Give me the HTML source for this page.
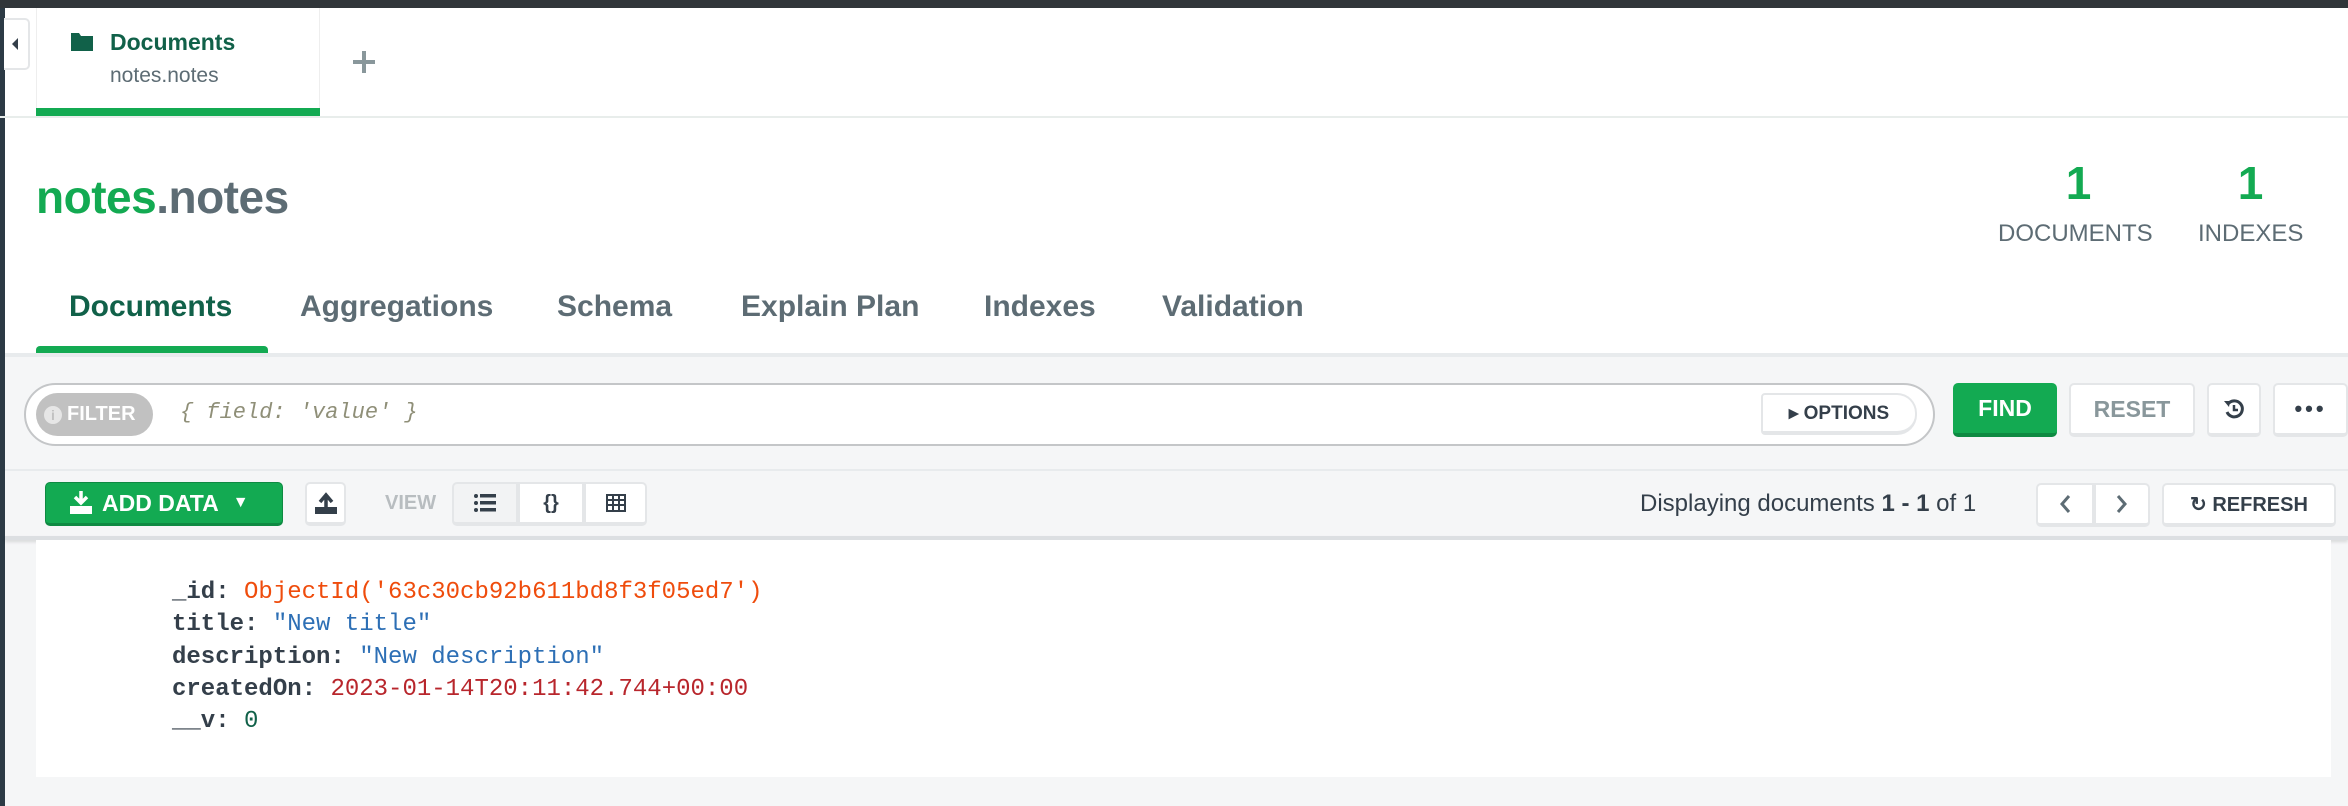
<!DOCTYPE html>
<html><head><meta charset="utf-8"><style>
*{margin:0;padding:0;box-sizing:border-box}
body{width:2348px;height:806px;overflow:hidden;background:#f5f6f7;font-family:"Liberation Sans",sans-serif;position:relative}
.a{position:absolute}
.btn{position:absolute;background:#fff;border:2px solid #e4e6e8;border-bottom-width:4px;border-radius:5px;display:flex;align-items:center;justify-content:center;color:#5d6c74;font-weight:bold}
.mono{font-family:"Liberation Mono",monospace}
.k{font-weight:bold;color:#343f4a}
.t{position:absolute;top:290px;font-size:30px;font-weight:bold;color:#5d6c74}
</style></head><body>
<div class="a" style="left:0;top:0;width:2348px;height:8px;background:#31363a"></div>
<div class="a" style="left:0;top:8px;width:2348px;height:110px;background:#fff"></div>
<div class="a" style="left:0;top:8px;width:5px;height:798px;background:#2c3a45"></div>
<div class="a" style="left:4px;top:18px;width:26px;height:52px;background:#fff;border:2px solid #e4e6e8;border-left:none;border-radius:0 5px 5px 0"></div>
<svg class="a" style="left:10px;top:38px" width="10" height="12"><path d="M8 0V12L2 6Z" fill="#343f4a"/></svg>
<div class="a" style="left:36px;top:8px;width:284px;height:108px;border-left:1px solid #eee;border-right:1px solid #eee"></div>
<svg class="a" style="left:71px;top:33px" width="22" height="18"><path d="M0 0H8L10 3H22V18H0Z" fill="#116149"/></svg>
<div class="a" style="left:110px;top:29px;font-size:23px;font-weight:bold;color:#116149">Documents</div>
<div class="a" style="left:110px;top:64px;font-size:21px;color:#5d6c74">notes.notes</div>
<div class="a" style="left:36px;top:108px;width:284px;height:8px;background:#13aa52"></div>
<svg class="a" style="left:352px;top:50px" width="24" height="24"><path d="M12 1V23M1 12H23" stroke="#89979b" stroke-width="4"/></svg>
<div class="a" style="left:0;top:116px;width:2348px;height:2px;background:#e8edeb"></div>
<div class="a" style="left:5px;top:118px;width:2343px;height:235px;background:#fff"></div>
<div class="a" style="left:36px;top:170px;font-size:46px;font-weight:bold;color:#5d6c74;letter-spacing:-0.5px"><span style="color:#13aa52">notes</span>.notes</div>
<div class="a" style="left:2000px;top:156px;width:157px;text-align:center;font-size:46px;font-weight:bold;color:#13aa52">1</div>
<div class="a" style="left:2198px;top:156px;width:105px;text-align:center;font-size:46px;font-weight:bold;color:#13aa52">1</div>
<div class="a" style="left:1998px;top:220px;font-size:24px;color:#5d6c74">DOCUMENTS</div>
<div class="a" style="left:2198px;top:220px;font-size:24px;color:#5d6c74">INDEXES</div>
<div class="t" style="left:69px;color:#116149">Documents</div>
<div class="t" style="left:300px">Aggregations</div>
<div class="t" style="left:557px">Schema</div>
<div class="t" style="left:741px">Explain Plan</div>
<div class="t" style="left:984px">Indexes</div>
<div class="t" style="left:1162px">Validation</div>
<div class="a" style="left:36px;top:346px;width:232px;height:8px;background:#13aa52;border-radius:4px 4px 0 0"></div>
<div class="a" style="left:5px;top:353px;width:2343px;height:4px;background:#e8ebed"></div>
<!-- filter -->
<div class="a" style="left:24px;top:383px;width:1911px;height:63px;background:#fff;border:2px solid #c4c6c8;border-radius:32px"></div>
<div class="a" style="left:36px;top:393px;width:117px;height:43px;background:#c1c1c1;border-radius:22px;color:#fff;font-weight:bold;font-size:20px;display:flex;align-items:center;padding-left:8px"><span style="display:inline-block;width:18px;height:18px;border-radius:50%;background:#e6e6e6;color:#c1c1c1;font-size:14px;text-align:center;line-height:18px;margin-right:5px">i</span>FILTER</div>
<div class="a mono" style="left:180px;top:400px;font-size:22px;font-style:italic;color:#8f8f78">{ field: 'value' }</div>
<div class="btn" style="left:1761px;top:393px;width:156px;height:42px;font-size:19px;color:#343f4a;border-radius:4px 20px 20px 4px">&#9656;&nbsp;OPTIONS</div>
<div class="a" style="left:1953px;top:383px;width:104px;height:54px;background:#13aa52;border-bottom:4px solid #0e8a42;border-radius:5px;color:#fff;font-weight:bold;font-size:23px;display:flex;align-items:center;justify-content:center">FIND</div>
<div class="btn" style="left:2069px;top:383px;width:126px;height:54px;font-size:23px;color:#89979b">RESET</div>
<div class="btn" style="left:2207px;top:383px;width:54px;height:54px;color:#343f4a"><svg width="22" height="22" viewBox="0 0 22 22"><path d="M5 6A8 8 0 1 1 4 14" stroke="#343f4a" stroke-width="3" fill="none"/><path d="M1 3L7 3L6 9Z" fill="#343f4a"/><path d="M11 7V12H15" stroke="#343f4a" stroke-width="2.5" fill="none"/></svg></div>
<div class="btn" style="left:2273px;top:383px;width:75px;height:54px;font-size:22px;color:#343f4a;letter-spacing:3px">•••</div>
<div class="a" style="left:5px;top:469px;width:2343px;height:2px;background:#e8ebed"></div>
<!-- toolbar -->
<div class="a" style="left:45px;top:482px;width:238px;height:44px;background:#13aa52;border:1px solid #0e8a42;border-bottom-width:3px;border-radius:5px;color:#fff;font-weight:bold;font-size:23px;display:flex;align-items:center;padding-left:24px"><svg width="22" height="24" style="margin-right:10px"><path d="M11 0V11M5 6L11 12L17 6" stroke="#fff" stroke-width="3.5" fill="none"/><rect x="0" y="15" width="22" height="8" fill="#fff"/></svg>ADD DATA<span style="margin-left:14px;font-size:16px">&#9660;</span></div>
<div class="btn" style="left:305px;top:482px;width:41px;height:44px"><svg width="22" height="24"><path d="M11 20V6M5 11L11 4L17 11" stroke="#343f4a" stroke-width="3.5" fill="none"/><rect x="0" y="16" width="22" height="7" fill="#343f4a"/></svg></div>
<div class="a" style="left:385px;top:492px;font-size:20px;font-weight:bold;color:#b8bdc0">VIEW</div>
<div class="btn" style="left:452px;top:482px;width:66px;height:44px;background:#f2f3f4;border-radius:5px 0 0 5px"><svg width="22" height="18"><g fill="#343f4a"><circle cx="2" cy="2" r="2"/><circle cx="2" cy="9" r="2"/><circle cx="2" cy="16" r="2"/><rect x="6" y="0" width="16" height="3.5"/><rect x="6" y="7" width="16" height="3.5"/><rect x="6" y="14" width="16" height="3.5"/></g></svg></div>
<div class="btn" style="left:518px;top:482px;width:66px;height:44px;border-radius:0;font-size:20px;color:#343f4a">{}</div>
<div class="btn" style="left:584px;top:482px;width:63px;height:44px;border-radius:0 5px 5px 0"><svg width="20" height="18"><g stroke="#343f4a" stroke-width="2" fill="none"><rect x="1" y="1" width="18" height="16"/><path d="M1 6H19M1 11H19M7 1V17M13 1V17"/></g></svg></div>
<div class="a" style="left:1640px;top:490px;font-size:24px;color:#343f4a">Displaying documents <b>1 - 1</b> of 1</div>
<div class="btn" style="left:2036px;top:483px;width:58px;height:44px;color:#5d6c74;border-radius:5px 0 0 5px"><svg width="12" height="20"><path d="M10 2L3 10L10 18" stroke="#5d6c74" stroke-width="3" fill="none"/></svg></div>
<div class="btn" style="left:2094px;top:483px;width:56px;height:44px;color:#5d6c74;border-radius:0 5px 5px 0"><svg width="12" height="20"><path d="M2 2L9 10L2 18" stroke="#5d6c74" stroke-width="3" fill="none"/></svg></div>
<div class="btn" style="left:2162px;top:483px;width:174px;height:44px;font-size:20px;color:#343f4a">&#8635;&nbsp;REFRESH</div>
<div class="a" style="left:5px;top:536px;width:2343px;height:4px;background:#dcdfe2;box-shadow:0 2px 3px rgba(0,0,0,0.12)"></div>
<!-- doc -->
<div class="a" style="left:36px;top:540px;width:2295px;height:237px;background:#fff"></div>
<div class="a mono" style="left:172px;top:577px;font-size:24px;line-height:32.3px;white-space:pre"><span class="k">_id:</span> <span style="color:#ef4c0c">ObjectId('63c30cb92b611bd8f3f05ed7')</span>
<span class="k">title:</span> <span style="color:#2d6fb5">"New title"</span>
<span class="k">description:</span> <span style="color:#2d6fb5">"New description"</span>
<span class="k">createdOn:</span> <span style="color:#b8262c">2023-01-14T20:11:42.744+00:00</span>
<span class="k">__v:</span> <span style="color:#116149">0</span></div>
</body></html>
